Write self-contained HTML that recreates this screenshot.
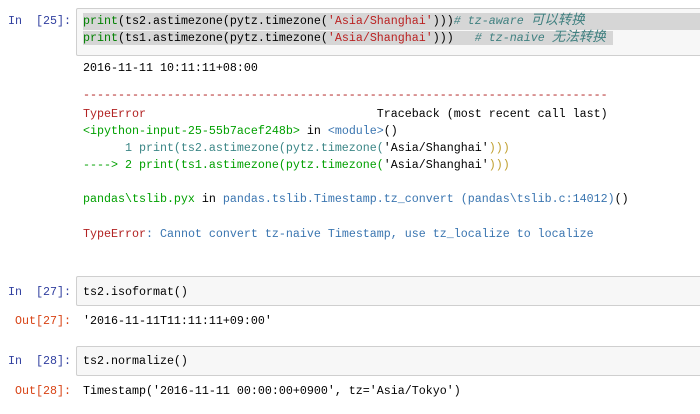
<!DOCTYPE html>
<html><head><meta charset="utf-8"><style>
body{margin:0;width:700px;height:414px;background:#fff;overflow:hidden;position:relative;font-family:"Liberation Mono","Noto Sans CJK SC",monospace;font-size:11.67px;}
.l{position:absolute;white-space:pre;line-height:17px;height:17px;}
.p{position:absolute;white-space:pre;color:#303F9F;line-height:17px;}
.o{position:absolute;white-space:pre;color:#D84315;line-height:17px;}
.box{position:absolute;left:76px;right:-2px;background:#f7f7f7;border:1px solid #cfcfcf;border-radius:2px;}
.k{color:#008000}.s{color:#BA2121}.c{color:#408080;font-style:italic}
.cj{font-size:13.5px}
.r{color:#B22222}.g{color:#00A000}.b{color:#3a75b0}.t{color:#3b8686}.y{color:#c0a030}
.sel{background:#d6d6d6}
</style></head><body>
<div class="p" style="left:8px;top:13px">In  [25]:</div>
<div class="box" style="top:8px;height:46px"></div>
<div class="l" style="left:83px;top:13px;right:0"><span class="sel" style="display:inline-block;width:617px"><span class="k">print</span>(ts2.astimezone(pytz.timezone(<span class="s">'Asia/Shanghai'</span>)))<span class="c"># tz-aware <span class="cj">可以转换</span></span></span></div>
<div class="l" style="left:83px;top:30px"><span class="sel"><span class="k">print</span>(ts1.astimezone(pytz.timezone(<span class="s">'Asia/Shanghai'</span>)))   <span class="c"># tz-naive <span class="cj">无法转换</span></span> </span></div>
<div class="l" style="left:83px;top:60px">2016-11-11 10:11:11+08:00</div>
<div class="l" style="left:83px;top:87px;color:#B22222">---------------------------------------------------------------------------</div>
<div class="l" style="left:83px;top:106px"><span class="r">TypeError</span>                                 Traceback (most recent call last)</div>
<div class="l" style="left:83px;top:123px"><span class="g">&lt;ipython-input-25-55b7acef248b&gt;</span> in <span class="b">&lt;module&gt;</span>()</div>
<div class="l" style="left:83px;top:140px" ><span class="t">      1 print(ts2.astimezone(pytz.timezone(</span>'Asia/Shanghai'<span class="y">)))</span></div>
<div class="l" style="left:83px;top:157px"><span class="g">----&gt; 2 print(ts1.astimezone(pytz.timezone(</span>'Asia/Shanghai'<span class="y">)))</span></div>
<div class="l" style="left:83px;top:191px"><span class="g">pandas\tslib.pyx</span> in <span class="b">pandas.tslib.Timestamp.tz_convert (pandas\tslib.c:14012)</span>()</div>
<div class="l" style="left:83px;top:226px"><span class="r">TypeError</span><span class="b">: Cannot convert tz-naive Timestamp, use tz_localize to localize</span></div>
<div class="p" style="left:8px;top:284px">In  [27]:</div>
<div class="box" style="top:276px;height:28px"></div>
<div class="l" style="left:83px;top:284px">ts2.isoformat()</div>
<div class="o" style="left:15px;top:313px">Out[27]:</div>
<div class="l" style="left:83px;top:313px">'2016-11-11T11:11:11+09:00'</div>
<div class="p" style="left:8px;top:353px">In  [28]:</div>
<div class="box" style="top:346px;height:28px"></div>
<div class="l" style="left:83px;top:353px">ts2.normalize()</div>
<div class="o" style="left:15px;top:383px">Out[28]:</div>
<div class="l" style="left:83px;top:383px">Timestamp('2016-11-11 00:00:00+0900', tz='Asia/Tokyo')</div>
</body></html>
